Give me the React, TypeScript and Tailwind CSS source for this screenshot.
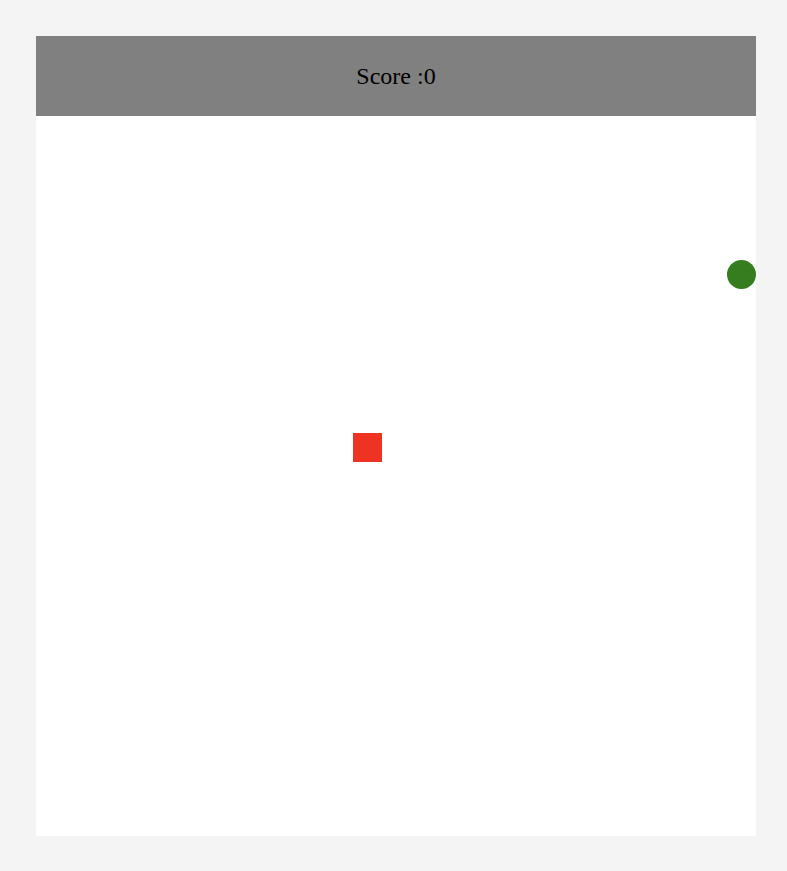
const App = () => {
    const snake = { x: 317, y: 317 };
    const food = { x: 691, y: 144 };

    return (
        <div className="min-h-screen bg-[#f4f4f4] p-[36px]" style={{ fontFamily: '"Liberation Serif", serif' }}>
            <div className="w-[720px]">
                <div className="h-[80px] bg-[#808080] flex items-center justify-center">
                    <p className="text-[24px] text-black">Score :0</p>
                </div>
                <div className="relative h-[720px] bg-white">
                    <div
                        className="absolute w-[29px] h-[29px] bg-[#ee3322]"
                        style={{ left: snake.x, top: snake.y }}
                    />
                    <div
                        className="absolute w-[29px] h-[29px] rounded-full bg-[#367d20]"
                        style={{ left: food.x, top: food.y }}
                    />
                </div>
            </div>
        </div>
    );
};

export default App;
